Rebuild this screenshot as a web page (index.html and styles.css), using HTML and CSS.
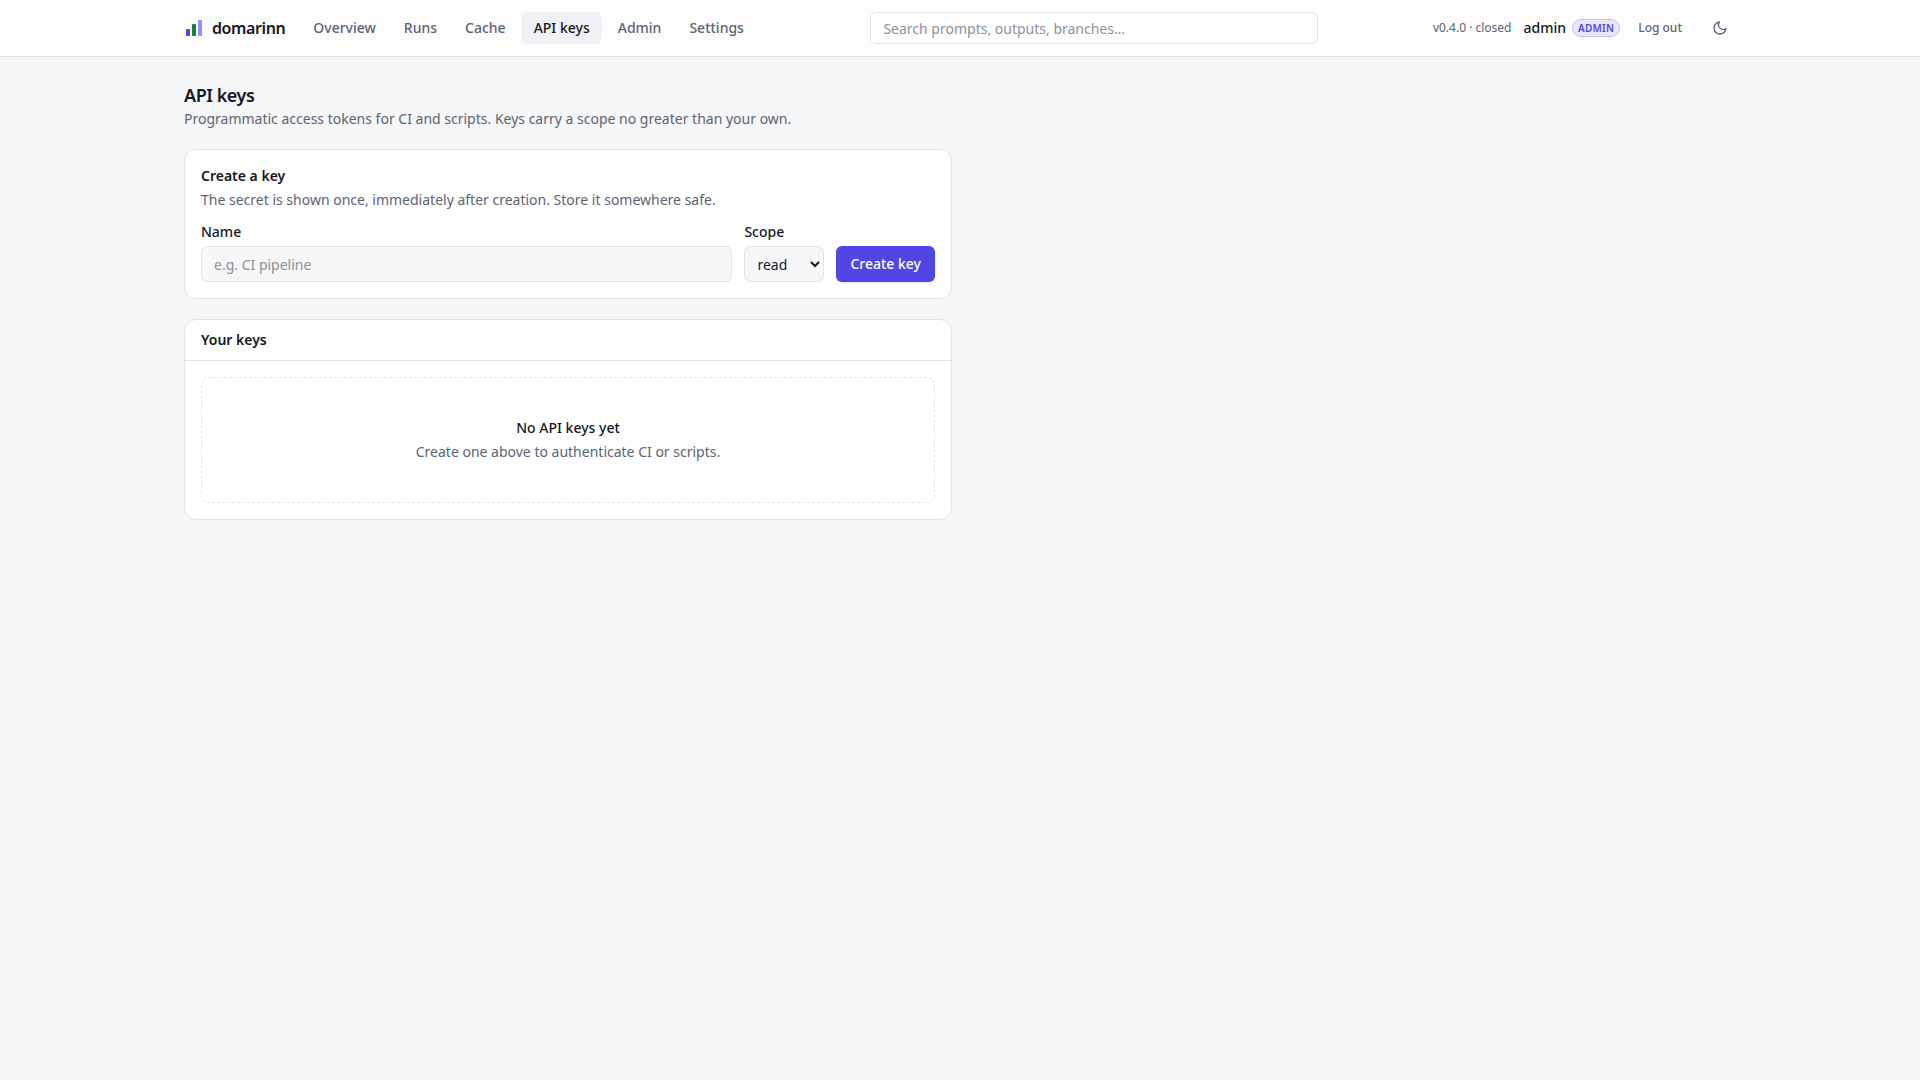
FILE: index.html
```html
<!DOCTYPE html>
<html lang="en">
<head>
<meta charset="utf-8">
<meta name="viewport" content="width=device-width, initial-scale=1">
<title>API keys · domarinn</title>
<link rel="stylesheet" href="styles.css">
</head>
<body>
<header class="topbar">
  <div class="topbar-inner">
    <a class="brand" href="#">
      <svg class="brand-mark" viewBox="0 0 20 20" aria-hidden="true">
        <rect x="2" y="11" width="4" height="7" rx="1" fill="#4f46e5"/>
        <rect x="8" y="6" width="4" height="12" rx="1" fill="#15803d"/>
        <rect x="14" y="2" width="4" height="16" rx="1" fill="#4f46e5" opacity=".6"/>
      </svg>
      <span>domarinn</span>
    </a>
    <nav class="nav" aria-label="Main">
      <a class="nav-link" href="#">Overview</a>
      <a class="nav-link" href="#">Runs</a>
      <a class="nav-link" href="#">Cache</a>
      <a class="nav-link active" href="#" aria-current="page">API keys</a>
      <a class="nav-link" href="#">Admin</a>
      <a class="nav-link" href="#">Settings</a>
    </nav>
    <form class="search">
      <input class="search-input" type="search" aria-label="Search" placeholder="Search prompts, outputs, branches…">
    </form>
    <div class="account">
      <span class="version">v0.4.0 · closed</span>
      <div class="session">
        <div class="user"><span class="user-name">admin</span><span class="badge">ADMIN</span></div>
        <button class="logout" type="button">Log out</button>
      </div>
      <button class="theme" type="button" aria-label="Dark theme">
        <svg class="theme-icon" viewBox="0 0 24 24" fill="none" stroke="currentColor" stroke-width="2" stroke-linecap="round" stroke-linejoin="round" aria-hidden="true"><path d="M21 12.8A9 9 0 1 1 11.200 3a7 7 0 0 0 9.800 9.800z"/></svg>
      </button>
    </div>
  </div>
</header>
<main class="page">
  <div class="page-head">
    <h1 class="page-title">API keys</h1>
    <p class="muted">Programmatic access tokens for CI and scripts. Keys carry a scope no greater than your own.</p>
  </div>
  <section class="card card-body">
    <h2 class="card-title">Create a key</h2>
    <p class="muted card-note">The secret is shown once, immediately after creation. Store it somewhere safe.</p>
    <form class="key-form">
      <div class="field field-grow">
        <label class="label" for="name">Name</label>
        <input class="control" id="name" type="text" placeholder="e.g. CI pipeline">
      </div>
      <div class="field">
        <label class="label" for="scope">Scope</label>
        <select class="control scope" id="scope"><option>read</option><option>write</option><option>admin</option></select>
      </div>
      <button class="primary" type="button">Create key</button>
    </form>
  </section>
  <section class="card">
    <div class="card-header"><h2 class="card-title">Your keys</h2></div>
    <div class="card-body">
      <div class="empty">
        <p class="empty-title">No API keys yet</p>
        <p class="muted">Create one above to authenticate CI or scripts.</p>
      </div>
    </div>
  </section>
</main>
</body>
</html>
```
FILE: styles.css
```css
:root {
  --bg: #f6f7f9;
  --surface: #ffffff;
  --line: #e2e4ea;
  --ink: #15181e;
  --muted: #5b6473;
  --accent: #4f46e5;
}
* { box-sizing: border-box; }
body {
  margin: 0;
  background: var(--bg);
  color: var(--ink);
  font-family: "Noto Sans", sans-serif;
  font-size: 14px;
  line-height: 20px;
}
h1, h2, p { margin: 0; }
a { color: inherit; text-decoration: none; }
button, input, select { font: inherit; color: inherit; }

.topbar { background: #fdfdfe; border-bottom: 1px solid var(--line); }
.topbar-inner {
  display: flex;
  align-items: center;
  gap: 16px;
  max-width: 1600px;
  height: 56px;
  margin: 0 auto;
  padding: 0 24px;
}
.brand { display: flex; align-items: center; gap: 8px; font-size: 16px; line-height: 24px; font-weight: 600; letter-spacing: -0.025em; }
.brand-mark { width: 20px; height: 20px; }
.nav { display: flex; gap: 4px; }
.nav-link { padding: 6px 12px; border-radius: 6px; color: var(--muted); font-weight: 500; white-space: nowrap; }
.nav-link.active { background: #f0f1f5; color: var(--ink); }
.search { flex: 1; display: flex; justify-content: center; }
.search-input {
  width: 100%;
  max-width: 448px;
  height: 32px;
  padding: 0 12px;
  border: 1px solid var(--line);
  border-radius: 6px;
  background: var(--surface);
  appearance: none;
}
.search-input::placeholder { color: #8b919e; }
.account { display: flex; align-items: center; gap: 12px; white-space: nowrap; }
.version { color: var(--muted); font-size: 12px; line-height: 16px; }
.session { display: flex; align-items: center; gap: 8px; }
.user { display: flex; align-items: center; gap: 6px; }
.user-name { font-weight: 500; }
.badge {
  padding: 0 5px;
  border: 1px solid #c6c2f6;
  border-radius: 9px;
  background: #e8e7fb;
  color: var(--accent);
  font-size: 10px;
  line-height: 16px;
  font-weight: 600;
  letter-spacing: 0.025em;
}
.logout { height: 28px; padding: 0 10px; border: 0; background: none; color: var(--muted); font-size: 12px; line-height: 16px; font-weight: 500; }
.theme { display: grid; place-items: center; width: 32px; height: 32px; padding: 0; border: 0; background: none; color: var(--muted); }
.theme-icon { width: 16px; height: 16px; }

.page {
  display: flex;
  flex-direction: column;
  gap: 20px;
  max-width: 1600px;
  margin: 0 auto;
  padding: 24px;
}
.page-title { font-size: 18px; line-height: 28px; font-weight: 600; letter-spacing: -0.025em; }
.muted { color: var(--muted); }
.card { width: 100%; max-width: 768px; border: 1px solid var(--line); border-radius: 12px; background: var(--surface); }
.card-body { padding: 16px; }
.card-header { padding: 10px 16px; border-bottom: 1px solid var(--line); }
.card-title { font-size: 14px; line-height: 20px; font-weight: 600; }
.card-note { margin-top: 4px; }
.key-form { display: flex; align-items: flex-end; gap: 12px; margin-top: 12px; }
.field { display: flex; flex-direction: column; gap: 4px; }
.field-grow { flex: 1; }
.label { font-weight: 500; }
.control { width: 100%; height: 36px; padding: 0 12px; border: 1px solid var(--line); border-radius: 6px; background: var(--bg); }
.control::placeholder { color: #8e9093; }
.scope { width: 80px; padding: 0 8px; }
.primary { height: 36px; padding: 0 14px; border: 0; border-radius: 6px; background: var(--accent); color: #fff; font-weight: 500; box-shadow: 0 1px 2px rgb(0 0 0 / 10%); }
.empty {
  display: flex;
  flex-direction: column;
  gap: 4px;
  padding: 40px 24px;
  border: 1px dashed var(--line);
  border-radius: 8px;
  text-align: center;
}
.empty-title { font-weight: 500; }
```
